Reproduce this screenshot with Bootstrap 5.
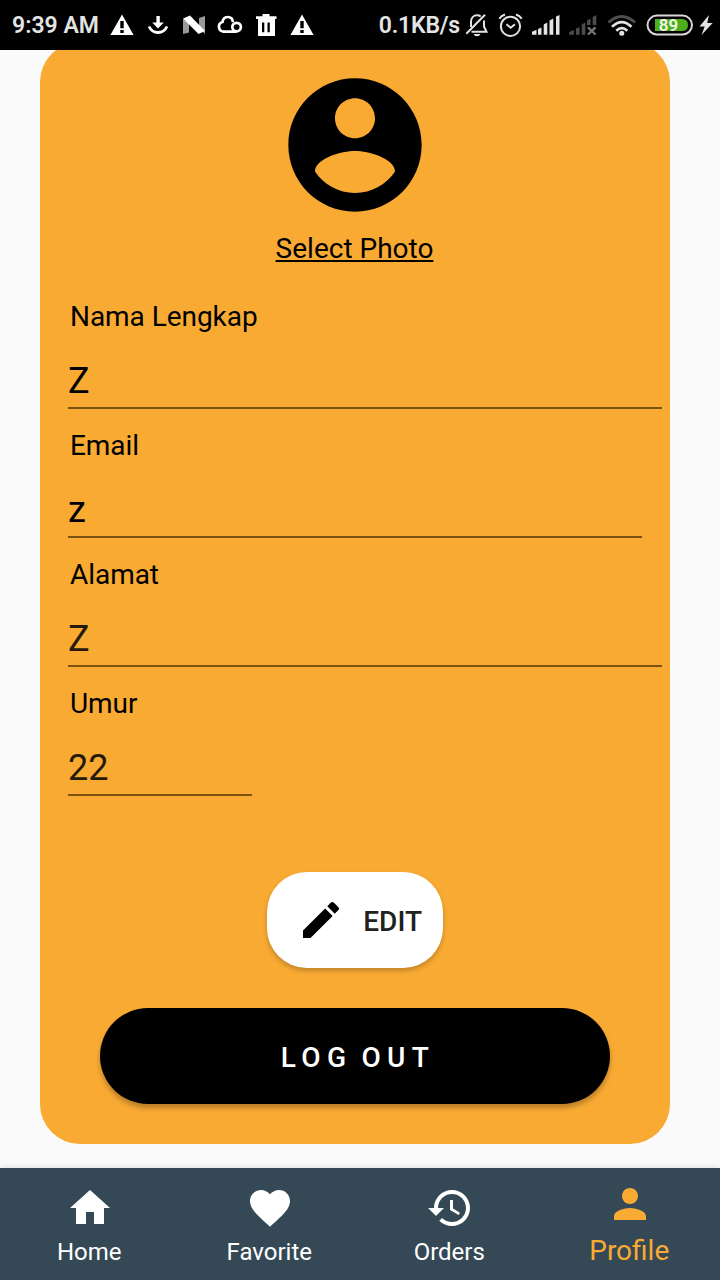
<!DOCTYPE html>
<html lang="id">
<head>
<meta charset="utf-8">
<meta name="viewport" content="width=device-width, initial-scale=1">
<title>Profile</title>
<link href="https://cdn.jsdelivr.net/npm/bootstrap@5.3.0/dist/css/bootstrap.min.css" rel="stylesheet">
<style>
  body { font-family: Roboto, "Noto Sans", sans-serif; background: #fafafa; color: #000; }
  svg { display: block; flex: none; }
  .screen { width: 720px; height: 1280px; }
  .statusbar { height: 50px; padding: 0 6px 0 12px; background: #000; color: #e4e4e4; font-size: 23px; font-weight: 600; z-index: 2; }
  .statusbar span { line-height: 28px; padding-top: 2px; white-space: nowrap; }
  .notif-icons { gap: 12px; }
  .sys-icons { gap: 8px; }
  .sys-icons span { letter-spacing: -.2px; }
  .profile-panel { width: 630px; height: 1102px; margin: -8px 0 24px 40px; padding-top: 23px; background: #f9aa33; border-radius: 40px; }
  .photo-link { font-size: 28px; line-height: 33px; margin: 7px 1px 0 0; color: #000; text-decoration-thickness: 2px; text-underline-offset: 2px; text-decoration-skip-ink: none; }
  .photo-link:hover { color: #000; }
  .profile-form { padding: 35px 8px 0 28px; }
  .field { height: 129px; }
  .field label { font-size: 28px; line-height: 33px; padding-left: 2px; margin-bottom: 27px; letter-spacing: -.05px; }
  .field .form-control { height: 49px; padding: 0 0 5px; border: 0; border-bottom: 2px solid #7c5213; border-radius: 0; background: transparent; color: #000; font-size: 36px; line-height: 42px; }
  .field .soft { color: #251a0c; }
  .field .w-email { width: 574px; }
  .field .w-age { width: 184px; }
  .btn-edit { width: 176px; height: 96px; margin-top: 56px; padding: 0 21px 0 30px; border: 0; border-radius: 40px; background: #fff; color: #212121; font-size: 28px; font-weight: 500; box-shadow: 0 3px 5px rgba(0,0,0,.22); }
  .btn-edit span { padding-top: 3px; }
  .btn-logout { width: 510px; height: 96px; margin-top: 40px; padding: 4px 0 0 6px; border: 0; border-radius: 48px; background: #000; color: #fff; font-size: 28px; font-weight: 500; letter-spacing: 6.400px; word-spacing: -4.500px; box-shadow: 0 4px 5px rgba(0,0,0,.26); }
  .tabbar { height: 112px; background: #344955; box-shadow: 0 -1px 6px rgba(0,0,0,.1); }
  .tabbar .nav-link { padding: 16px 0 0; color: #fff; font-size: 24px; line-height: 28px; }
  .tabbar .nav-link svg { margin-bottom: 6px; }
  .tabbar .nav-link span { margin-right: 1.500px; }
  .tabbar .nav-link.active { padding-top: 12px; color: #f9aa33; font-size: 28px; line-height: 33px; }
</style>
</head>
<body>
<div class="screen d-flex flex-column overflow-hidden">
  <header class="statusbar d-flex align-items-center justify-content-between flex-shrink-0 position-relative">
    <div class="d-flex align-items-center">
      <span style="width:98px">9:39 AM</span>
      <div class="notif-icons d-flex">
        <svg width="24" height="24" viewBox="110 13 24 24"><path fill="#fff" fill-rule="evenodd" d="M122 14.5 133.6 35H110.4zM120.3 21v7.3h3.4V21zM120.3 30v3h3.4v-3z"/></svg>
        <svg width="24" height="24" viewBox="146 13 24 24"><path fill="#fff" d="M156.4 16h3.4v6.6h4L158 28.600l-5.800-6h4.200z"/><path fill="none" stroke="#fff" stroke-width="2.800" d="M149 26.500q2.800 6 9 6t9-6"/></svg>
        <svg width="24" height="24" viewBox="182 13 24 24"><path fill="#9a9a9a" d="M183 19l6 3v10.500l-6 1.500zM205 16v18l-6-6V18z"/><path fill="#fff" d="M183 18.500l7-3L205 31l-6.500 3z"/></svg>
        <svg width="26" height="24" viewBox="217 13 26 24" style="margin-left:-1px;margin-right:-1px"><g fill="none" stroke="#fff" stroke-width="2.700"><path d="M236.500 31.600H223.500a4.900 4.900 0 0 1-1-9.600c.4-3 2.400-5 5.200-5 2.900 0 5 2 5.200 5.200"/><circle cx="236.600" cy="27.100" r="4.300"/></g></svg>
        <svg width="24" height="24" viewBox="254 13 24 24"><path fill="#fff" fill-rule="evenodd" d="M256 16.300h6.500V14h7v2.300h7V19H256zM258 19h17v17h-17zM262 22.400v9.800h2.300v-9.800zM267.500 22.400v9.800h2.300v-9.800z"/></svg>
        <svg width="24" height="24" viewBox="290 13 24 24"><path fill="#fff" fill-rule="evenodd" d="M302 14.500 313.600 35H290.400zM300.300 21v7.300h3.400V21zM300.300 30v3h3.400v-3z"/></svg>
      </div>
    </div>
    <div class="sys-icons d-flex align-items-center">
      <span style="margin-right:-3px">0.1KB/s</span>
      <svg width="24" height="24" viewBox="465 13 24 24"><g fill="none" stroke="#e4e4e4" stroke-width="2"><path d="M471 27v-5c0-4 2.500-6.700 6-6.700 1.500 0 2.700.4 3.700 1.200M484 20.500v6l2.500 5.300H471.500M466.300 33.700 485 14.800"/></g><path fill="#e4e4e4" d="M473.500 34h7q-1 2.200-3.500 2.200T473.500 34z"/></svg>
      <svg width="26" height="24" viewBox="497 13 26 24"><g fill="none" stroke="#e4e4e4" stroke-width="2"><circle cx="510.500" cy="26.300" r="9.600"/><path d="M506.500 24.300l4.200 3.500 4.200-3.500M499.300 18.800q2-3.300 5.700-4.300M521.700 18.800q-2-3.300-5.700-4.300"/></g></svg>
      <svg width="30" height="24" viewBox="531 13 30 24"><path fill="#e4e4e4" d="M532 34.800v-3l4.500-2v5zM538 29l3.500-1.500v7.300H538zM543.700 24.500l3.600-2v12.300h-3.600zM549.500 20.500l3.800-2v16.300h-3.800zM556 16.500l3.500-1.500v19.800H556z"/></svg>
      <svg width="30" height="24" viewBox="569 13 30 24"><path fill="#4c4c4c" d="M569.200 34.800v-2.500l4.600-2.500v5zM576 28.500l3.500-1.500v7.800H576zM581.700 24.500l3.600-2v12.300h-3.600zM587 20.500l3.500-2v6.500H587zM592.700 17l3.600-2v10h-3.600z"/><path stroke="#747474" stroke-width="2.300" d="M588 27.300l7.500 7.200M595.500 27.300 588 34.500"/></svg>
      <svg width="30" height="24" viewBox="607 13 30 24"><g fill="none" stroke-width="2.700"><path stroke="#4e4e4e" d="M608.500 22.500q13.200-12 26.500 0"/><path stroke="#e4e4e4" d="M612 26.800q9.700-9.400 19.500 0M616.300 30.700q5.500-5.200 11 0"/></g><circle cx="621.800" cy="33.300" r="2.500" fill="#e4e4e4"/></svg>
      <svg width="49" height="24" viewBox="645 13 49 24"><rect x="647.500" y="15.600" width="44.500" height="19" rx="9.500" fill="none" stroke="#ddd5dd" stroke-width="2"/><path fill="#4caf1b" d="M655 19h27q6 0 6 6t-6 6h-27z"/><text x="668.500" y="31" text-anchor="middle" font-family="Roboto" font-size="17" font-weight="600" fill="#f4f4e8">89</text></svg>
      <svg width="16" height="24" viewBox="698 13 16 24" style="margin-left:-4px"><path fill="#e4e4e4" d="M709 15l-9.500 11.500h5.200L701.500 35 712.700 23h-5.500z"/></svg>
    </div>
  </header>

  <main class="profile-panel d-flex flex-column align-items-center flex-shrink-0">
    <svg width="160" height="160" viewBox="0 0 24 24"><path d="M12 2C6.480 2 2 6.480 2 12s4.480 10 10 10 10-4.480 10-10S17.520 2 12 2zm0 3c1.660 0 3 1.340 3 3s-1.340 3-3 3-3-1.340-3-3 1.340-3 3-3zm0 14.200c-2.500 0-4.710-1.280-6-3.220.030-1.990 4-3.080 6-3.080 1.990 0 5.970 1.090 6 3.080-1.290 1.940-3.500 3.220-6 3.220z"/></svg>
    <a class="photo-link" href="#">Select Photo</a>

    <form class="profile-form w-100">
      <div class="field"><label class="d-block" for="nama">Nama Lengkap</label><input class="form-control" id="nama" type="text" value="Z"></div>
      <div class="field"><label class="d-block" for="email">Email</label><input class="form-control w-email" id="email" type="text" value="z"></div>
      <div class="field"><label class="d-block" for="alamat">Alamat</label><input class="form-control soft" id="alamat" type="text" value="Z"></div>
      <div class="field"><label class="d-block" for="umur">Umur</label><input class="form-control soft w-age" id="umur" type="text" value="22"></div>
    </form>

    <button type="button" class="btn btn-edit d-flex align-items-center justify-content-between">
      <svg width="48" height="48" viewBox="0 0 24 24"><path d="M3 17.250V21h3.750L17.810 9.940l-3.750-3.750L3 17.250zM20.710 7.040c.390-.390.390-1.020 0-1.410l-2.340-2.340c-.390-.390-1.020-.390-1.410 0l-1.830 1.830 3.750 3.750 1.830-1.830z"/></svg>
      <span>EDIT</span>
    </button>
    <button type="button" class="btn btn-logout">LOG OUT</button>
  </main>

  <nav class="tabbar nav nav-justified flex-shrink-0">
    <a class="nav-item nav-link d-flex flex-column align-items-center" href="#">
      <svg width="48" height="48" viewBox="0 0 24 24" fill="currentColor"><path d="M10 20v-6h4v6h5v-8h3L12 3 2 12h3v8z"/></svg><span>Home</span></a>
    <a class="nav-item nav-link d-flex flex-column align-items-center" href="#">
      <svg width="48" height="48" viewBox="0 0 24 24" fill="currentColor"><path d="M12 21.350l-1.450-1.320C5.400 15.360 2 12.280 2 8.500 2 5.420 4.420 3 7.500 3c1.740 0 3.410.810 4.500 2.090C13.090 3.810 14.760 3 16.500 3 19.580 3 22 5.420 22 8.500c0 3.780-3.400 6.860-8.550 11.540L12 21.350z"/></svg><span>Favorite</span></a>
    <a class="nav-item nav-link d-flex flex-column align-items-center" href="#">
      <svg width="48" height="48" viewBox="0 0 24 24" fill="currentColor"><path d="M13 3c-4.970 0-9 4.030-9 9H1l3.890 3.890.070.140L9 12H6c0-3.870 3.130-7 7-7s7 3.130 7 7-3.130 7-7 7c-1.930 0-3.680-.790-4.940-2.060l-1.420 1.420C8.270 19.990 10.510 21 13 21c4.970 0 9-4.030 9-9s-4.030-9-9-9zm-1 5v5l4.280 2.540.720-1.210-3.500-2.080V8H12z"/></svg><span>Orders</span></a>
    <a class="nav-item nav-link active d-flex flex-column align-items-center" href="#">
      <svg width="48" height="48" viewBox="0 0 24 24" fill="currentColor"><path d="M12 12c2.210 0 4-1.790 4-4s-1.790-4-4-4-4 1.790-4 4 1.790 4 4 4zm0 2c-2.670 0-8 1.340-8 4v2h16v-2c0-2.660-5.330-4-8-4z"/></svg><span>Profile</span></a>
  </nav>
</div>
<script src="https://cdn.jsdelivr.net/npm/bootstrap@5.3.0/dist/js/bootstrap.bundle.min.js"></script>
</body>
</html>
